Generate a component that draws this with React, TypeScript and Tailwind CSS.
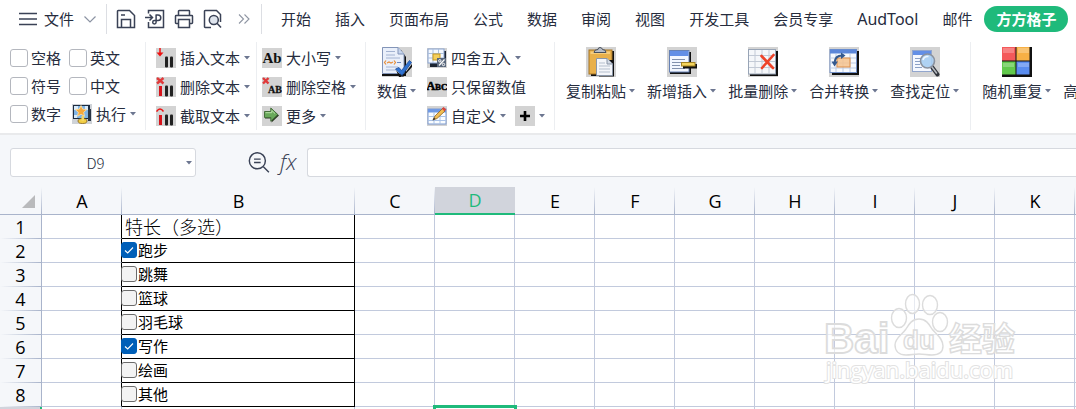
import React, { useState } from "react";

type IconProps = { className?: string };

const tabs = ["开始", "插入", "页面布局", "公式", "数据", "审阅", "视图", "开发工具", "会员专享", "AudTool", "邮件"];
const columns = ["A", "B", "C", "D", "E", "F", "G", "H", "I", "J", "K"];
const skills = [
  { name: "跑步", on: true },
  { name: "跳舞", on: false },
  { name: "篮球", on: false },
  { name: "羽毛球", on: false },
  { name: "写作", on: true },
  { name: "绘画", on: false },
  { name: "其他", on: false },
];

function Caret() {
  return (
    <svg viewBox="0 0 6 4" className="h-1 w-1.5 shrink-0" aria-hidden="true">
      <path d="M0 0h6L3 3.5z" fill="#6c7690" />
    </svg>
  );
}

/* ---------- quick access icons ---------- */

function Line({ children, className = "size-5" }: { children: React.ReactNode; className?: string }) {
  return (
    <svg viewBox="0 0 20 20" className={className} fill="none" stroke="#3a4256" strokeWidth="1.5" aria-hidden="true">
      {children}
    </svg>
  );
}

const SaveIcon = () => (
  <Line>
    <path d="M2.2 1.5H13.5L18.5 6.5V18.5H1.5V2.2Q1.5 1.5 2.2 1.5ZM5 6h4M5.5 18.5V10.5H14.5V18.5" />
  </Line>
);
const ExportIcon = () => (
  <Line>
    <path d="M3.5 4.5V1.5H18.5V18.5H3.5V13M0 8.5H7.5M4.5 5.5l3 3-3 3" />
    <path d="M10.5 6H13a2.8 2.8 0 0 1 0 5.6H9.4a1.7 1.7 0 1 0 1.7 1.7V6" />
  </Line>
);
const PrintIcon = () => (
  <Line>
    <path d="M4.5 6V2.2Q4.5 1.5 5.2 1.5H14.8Q15.5 1.5 15.5 2.2V6M4.5 14.5H2.2Q1.5 14.5 1.5 13.8V7.2Q1.5 6.5 2.2 6.5H17.8Q18.5 6.5 18.5 7.2V13.8Q18.5 14.5 17.8 14.5H15.5M4.5 10.5H15.5V18.5H4.5Z" />
  </Line>
);
const PreviewIcon = () => (
  <Line>
    <path d="M8 18.5H2.2Q1.5 18.5 1.5 17.8V2.2Q1.5 1.5 2.2 1.5H13.5L17.5 5.5V13" />
    <circle cx="10.8" cy="11" r="4.5" fill="#dfe5ee" />
    <path d="M14 14.3L18 18.5" />
  </Line>
);

/* ---------- small ribbon icons ---------- */

function Small({ children, bg = "#d3d3d3" }: { children: React.ReactNode; bg?: string }) {
  return (
    <svg viewBox="0 0 20 20" className="size-5 shrink-0" aria-hidden="true">
      <rect width="20" height="20" fill={bg} />
      {children}
    </svg>
  );
}

const Bars = ({ red = false }: { red?: boolean }) => (
  <g>
    {red && <rect x="3" y="9" width="3" height="10" fill="#d8141c" />}
    <rect x="9" y="8.5" width="3" height="11" rx="1" fill="#222" />
    <rect x="14" y="8.5" width="3" height="11" rx="1" fill="#222" />
  </g>
);
const InsertTextIcon = () => (
  <Small>
    <path d="M4 0V5" stroke="#ee1111" strokeWidth="1.5" />
    <path d="M.5 4.5H7.5L4 8.5Z" fill="#ee1111" />
    <Bars />
  </Small>
);
const DeleteTextIcon = () => (
  <Small>
    <path d="M1 1L7.5 6.5M7.5 1L1 6.5" stroke="#e0393a" strokeWidth="2.4" />
    <Bars red />
  </Small>
);
const CutTextIcon = () => (
  <Small>
    <path d="M.5 5.5Q4 .5 7.5 5.5" fill="none" stroke="#ee1111" strokeWidth="1.5" />
    <Bars red />
  </Small>
);
const RunIcon = () => (
  <Small bg="#cfd3d8">
    <rect x="1" y="1" width="17" height="14" fill="#1d2c40" />
    <rect x="2" y="2" width="14" height="12" fill="#7fb4e6" />
    <path d="M2 2h4v4H2zM13 2h3v4h-3zM2 11h3v3H2z" fill="#d9ebfa" />
    <path d="M9 1.5l1.7 3.6 4 .5-3 2.7.8 4L9 10.3l-3.5 2 .8-4-3-2.7 4-.5z" fill="#f6a93b" stroke="#ffe5ad" strokeWidth=".8" />
    <path d="M16 5h3v12h-3z" fill="#2b3645" />
    <ellipse cx="10.5" cy="17" rx="4.5" ry="2.5" fill="#f2cf46" stroke="#8a6417" strokeWidth=".8" />
    <path d="M9.5 12h2.500v5h-2.500z" fill="#f5d765" />
  </Small>
);
const CaseIcon = () => (
  <Small>
    <text x="10" y="15" textAnchor="middle" fontSize="15" fontWeight="700" fontFamily="Liberation Serif, serif" fill="#111">Ab</text>
  </Small>
);
const TrimIcon = () => (
  <Small>
    <path d="M1 1L6.5 6.5M6.5 1L1 6.5" stroke="#e0393a" strokeWidth="2.4" />
    <text x="13" y="16" textAnchor="middle" fontSize="10" fontWeight="700" fontFamily="Liberation Serif, serif" fill="#111" stroke="#111" strokeWidth=".3">AB</text>
  </Small>
);
const MoreIcon = () => (
  <Small>
    <path d="M3 6.5H9.5V2.5L17 9.5L9.5 16.5V12.5H3Z" fill="#2b3b22" />
    <path d="M2.5 5.5H8.8V2L15.8 8.6L8.8 15.2V11.5H2.5Z" fill="#69a95a" stroke="#466f3c" strokeWidth="1" />
    <path d="M3.5 6.7H9.8V4.5L13 7.5" fill="none" stroke="#b9e0a8" />
  </Small>
);
const GridPaper = () => (
  <g>
    <rect x="1" y="1" width="16" height="14" fill="#f4f8ff" stroke="#8aa4cf" />
    <path d="M1 5.5H17M1 10H17M6 1V15M11.5 1V15" stroke="#a9bfdf" />
  </g>
);
const RoundIcon = () => (
  <Small>
    <path d="M3 3H19V19H3Z" fill="#1c2431" />
    <GridPaper />
    <rect x="6" y="6" width="7" height="6" fill="#f4cf5c" stroke="#c79a22" />
    <rect x="10" y="10" width="9" height="9" fill="#59677c" />
    <path d="M12 17.5L17.5 11.5" stroke="#fff" strokeWidth="1.2" />
    <circle cx="12.8" cy="12.8" r="1.2" fill="none" stroke="#fff" />
    <circle cx="16.5" cy="16.5" r="1.2" fill="none" stroke="#fff" />
  </Small>
);
const AbcIcon = () => (
  <Small>
    <text x="10" y="13" textAnchor="middle" fontSize="12" fontWeight="700" fontFamily="Liberation Serif, serif" fill="#000" stroke="#000" strokeWidth=".5">
      A<tspan fontSize="9">BC</tspan>
    </text>
  </Small>
);
const CustomIcon = () => (
  <Small>
    <rect x="1" y="3" width="18" height="15" fill="#fafdff" stroke="#7d9ad0" />
    <rect x="1" y="3" width="18" height="3.5" fill="#6f99e4" />
    <path d="M1 10.5H19M1 14.5H19M7 6V18M13 6V18" stroke="#a9c2e8" />
    <path d="M6 14L8 10L15.5 2.5L18 5L10 12.5Z" fill="#f1bd52" stroke="#8f6425" strokeWidth=".8" />
    <path d="M14.8 2.8L16.5 1L19.3 3.5L17.5 5.3Z" fill="#d9443d" />
    <path d="M5.5 14.5L7 11.5L8.5 13Z" fill="#333" />
  </Small>
);
const PlusIcon = () => (
  <Small>
    <path d="M10 5V15M5 10H15" stroke="#000" strokeWidth="2.6" />
  </Small>
);

/* ---------- large ribbon icons ---------- */

function Large({ children, bg = "#d3d3d3" }: { children: React.ReactNode; bg?: string }) {
  return (
    <svg viewBox="0 0 30 30" className="size-[30px]" aria-hidden="true">
      <rect width="30" height="30" fill={bg} />
      {children}
    </svg>
  );
}

const ValueIcon = () => (
  <Large>
    <path d="M3 3H19L24 10V29H0V27H3Z" fill="#111" />
    <path d="M.5 .5H16L22 7V26.5H.5Z" fill="#e9effa" stroke="#8395b8" />
    <path d="M16 .5V7H22" fill="#c6d5ee" stroke="#8395b8" />
    <path d="M4 4.5H13M4 8H13M4 11H18M4 20H16M4 23H14" stroke="#a4b4d2" />
    <path d="M4 13.5L2.5 15.5L4 17.5M12 13.5L13.5 15.5L12 17.5M5 16L7 15L9 16L11 15" fill="none" stroke="#e88e38" strokeWidth="1.2" />
    <path d="M15 15.5h4" stroke="#6d89bf" />
    <path d="M14 23L20 30L30 17V20L21 30H17Z" fill="#111" />
    <path d="M13.5 22L17 20.5L19.5 23.5L27.5 13.5L29.5 15.5L20 28.5Z" fill="#2f72d0" stroke="#1d4c9b" strokeWidth=".8" />
  </Large>
);
const PasteIcon = () => (
  <Large>
    <path d="M5 4H28V29H5Z" fill="#111" />
    <rect x="3" y="3" width="23" height="24" fill="#e9b04a" stroke="#a47426" />
    <path d="M4.5 4.5H24V7H4.5Z" fill="#f6cd7c" />
    <path d="M8 5.5Q8 2.5 12 2.5Q12 .5 14 .5Q16 .5 16.5 2.5Q20 2.5 20 5.5Z" fill="#b8bec8" stroke="#49505c" />
    <path d="M13 13H28V29.5H13Z" fill="#111" />
    <path d="M10.5 11.5H21L26.5 17V28.5H10.5Z" fill="#f4f6fa" stroke="#8a96a8" />
    <path d="M21 11.5V17H26.5" fill="#d3dae5" stroke="#8a96a8" />
    <path d="M13 16H19M13 19H24M13 22H24M13 25H24" stroke="#b5bfcd" />
  </Large>
);
const AddIcon = () => (
  <Large>
    <path d="M5 5H24V27H3V25H5Z" fill="#111" />
    <rect x="2.5" y="3.5" width="19.5" height="21.5" fill="#f3f7ff" stroke="#6681b4" />
    <rect x="3" y="4" width="18.5" height="5" fill="#638fe6" />
    <path d="M5 12.5H18M5 15.5H14M5 18.5H13M5 21.5H18" stroke="#8291ad" />
    <rect x="16" y="17" width="14" height="4.5" fill="#111" />
    <rect x="14.5" y="15.5" width="13.5" height="3.5" fill="#f4d45e" stroke="#a38220" />
  </Large>
);
const BatchDeleteIcon = () => (
  <Large>
    <path d="M3 4H30V29H2V27H3Z" fill="#111" />
    <rect x=".5" y="2.5" width="27" height="24.5" fill="#f5f7fa" stroke="#98a4b6" />
    <path d="M1 8.5H27M1 14.5H27M1 20.5H27M7 3V27M14 3V27M21 3V27" stroke="#c3cad6" />
    <path d="M13.5 9L25 21M25.5 8L14 21" stroke="#ee4329" strokeWidth="2.6" strokeLinecap="round" />
  </Large>
);
const MergeIcon = () => (
  <Large>
    <path d="M3 4H30V28H3Z" fill="#111" />
    <rect x="1" y="2.5" width="26.5" height="23" fill="#f7faff" stroke="#7390c6" />
    <rect x="1" y="2.5" width="26.5" height="4" fill="#5c87da" />
    <path d="M1 11H27M1 16H27M1 21H27M7 7V25M14 7V25M21 7V25" stroke="#bccbe4" />
    <rect x="8" y="11" width="13" height="9" fill="#f6c28d" fillOpacity=".85" stroke="#dd8f4b" />
    <path d="M5.5 16Q6 8.500 13 8.500" fill="none" stroke="#34598e" strokeWidth="2" />
    <path d="M2.5 14.5H9L5.5 19.5ZM12 5.5V12L16.500 8.500Z" fill="#34598e" />
  </Large>
);
const FindIcon = () => (
  <Large>
    <rect x="2.5" y="3.5" width="19" height="21" fill="#f5f8ff" stroke="#92a6cd" />
    <rect x="3" y="4" width="18" height="4" fill="#638fe6" />
    <path d="M5 11.5H12M5 14.5H10M5 17.5H10M5 20.5H12" stroke="#8ba0c6" />
    <path d="M22 20L27.5 27.5" stroke="#30343b" strokeWidth="4" strokeLinecap="round" />
    <path d="M22 20L26.5 26" stroke="#b6bac1" strokeWidth="1.6" strokeLinecap="round" />
    <circle cx="17.5" cy="14" r="7" fill="#a7cdf2" fillOpacity=".9" stroke="#8b929e" strokeWidth="1.6" />
    <path d="M13 13Q14 9 18.5 9.5" fill="none" stroke="#eef7ff" strokeWidth="1.6" />
  </Large>
);
const RandomIcon = () => (
  <Large bg="#111111">
    <path d="M0 0H13.500V13.500H0Z" fill="#f4595a" />
    <path d="M14.500 0H27.500V13.500H14.500Z" fill="#f7b045" />
    <path d="M0 14.500H13.500V27.500H0Z" fill="#62c94c" />
    <path d="M14.500 14.500H27.500V27.500H14.500Z" fill="#5a8df0" />
    <path d="M1 1H12V6H1ZM16 1H27V6H16ZM1 16H12V20H1ZM16 16H27V20H16Z" fill="#fff" fillOpacity=".25" />
  </Large>
);

/* ---------- ribbon parts ---------- */

function SmallButton({ icon: Icon, label, caret = true }: { icon: React.ComponentType<IconProps>; label: string; caret?: boolean }) {
  return (
    <button type="button" className="flex h-7 items-center gap-1 whitespace-nowrap">
      <Icon />
      <span>{label}</span>
      {caret && <Caret />}
    </button>
  );
}

function LargeButton({ icon: Icon, label }: { icon: React.ComponentType<IconProps>; label: string }) {
  return (
    <button type="button" className="flex shrink-0 flex-col items-center gap-1 self-start pt-[5px]">
      <Icon />
      <span className="flex items-center gap-[3px] whitespace-nowrap leading-5">
        {label}
        <Caret />
      </span>
    </button>
  );
}

function RibbonCheck({ label }: { label: string }) {
  return (
    <label className="flex items-center gap-[3px] whitespace-nowrap">
      <input type="checkbox" className="size-[18px] appearance-none rounded-[3px] border border-[#b4b7be] bg-white checked:bg-[#1fba7b]" />
      {label}
    </label>
  );
}

function CellCheck({ name, initial }: { name: string; initial: boolean }) {
  const [on, setOn] = useState(initial);
  return (
    <label className="-ml-px flex items-center gap-px pb-0.5">
      <span className="grid size-4 shrink-0">
        <input
          type="checkbox"
          checked={on}
          onChange={(e) => setOn(e.target.checked)}
          className="col-start-1 row-start-1 size-4 appearance-none rounded-[3px] border border-[#6b6b6b] bg-[#f3f3f3] checked:border-[#005fb8] checked:bg-[#005fb8]"
        />
        {on && (
          <svg viewBox="0 0 16 16" className="pointer-events-none col-start-1 row-start-1 size-4" aria-hidden="true">
            <path d="M4 8.5L6.7 11L12 5.5" fill="none" stroke="#fff" strokeWidth="1.1" />
          </svg>
        )}
      </span>
      {name}
    </label>
  );
}

function Watermark() {
  return (
    <svg viewBox="0 0 200 105" className="pointer-events-none absolute top-[98px] right-14 h-[105px] w-[200px]" fill="#fff" fillOpacity=".6" stroke="#dcdcdc" strokeWidth="1.4" aria-hidden="true">
      <text x="4" y="68" fontSize="42" fontWeight="700" strokeWidth="1.8" fontFamily="Liberation Sans, sans-serif">Bai</text>
      <ellipse cx="79" cy="33" rx="7.5" ry="9.5" />
      <ellipse cx="92.5" cy="19" rx="7" ry="9.5" />
      <ellipse cx="110" cy="20" rx="7.5" ry="9.5" />
      <ellipse cx="120" cy="37" rx="7.5" ry="9.5" />
      <path d="M99 34C106 34 109 39 112 44C116 49 123 53 123 61C123 67 119 70 112 70C107 70 104 69 99 69C94 69 91 70 86 70C79 70 75 66 75 60C75 53 82 50 86 44C89 39 92 34 99 34Z" />
      <text x="83" y="64" fontSize="26" fontWeight="700" fontFamily="Liberation Sans, sans-serif">du</text>
      <text x="129" y="66" fontSize="33" fontWeight="700" fontFamily="Noto Sans CJK SC, sans-serif">经验</text>
      <text x="6" y="93" fontSize="22" fillOpacity="1" stroke="#e2e2e2" strokeWidth="2" paintOrder="stroke" fontFamily="Open Sans, sans-serif">jingyan.baidu.com</text>
    </svg>
  );
}

const gridCell = "border-r border-b border-[#c2cadd] p-0";
const blackCell = "border-r border-b border-black p-0";
const rowHead =
  "border-r border-[#a9b4cb] bg-[#f5f7fa] bg-[linear-gradient(to_right,transparent,#a9b4cb)] bg-[length:100%_1px] bg-bottom bg-no-repeat p-0 text-center font-normal";

function GridRow({ n, children }: { n: number; children: React.ReactNode }) {
  return (
    <tr className="h-6">
      <th scope="row" className={rowHead}>{n}</th>
      <td className="border-r border-b border-r-black border-b-[#c2cadd] p-0" />
      <td className={blackCell}>{children}</td>
      {columns.slice(2).map((c) => (
        <td key={c} className={gridCell} />
      ))}
      <td className="border-b border-[#c2cadd] p-0" />
    </tr>
  );
}

export default function App() {
  return (
    <div className="flex h-screen flex-col overflow-hidden bg-white font-['Open_Sans','Noto_Sans_CJK_SC',sans-serif] text-[15px] leading-5 text-[#262c3d]">
      <header className="flex h-[38px] shrink-0 items-center whitespace-nowrap">
        <button type="button" className="flex items-center gap-[7px] pl-[19px]">
          <svg viewBox="0 0 18 14" className="h-3.5 w-[18px]" stroke="#3a4256" strokeWidth="1.3" aria-hidden="true">
            <path d="M0 1.5H18M0 7H18M0 12.5H18" />
          </svg>
          文件
          <svg viewBox="0 0 12 8" className="ml-[3px] h-2 w-3" fill="none" stroke="#8b93a3" strokeWidth="1.2" aria-hidden="true">
            <path d="M.5 1.5L6 7L11.5 1.5" />
          </svg>
        </button>
        <div className="ml-2.5 flex h-[30px] items-center gap-[9px] border-x border-[#dcdee3] pr-[11px] pl-[9px]">
          <button type="button" aria-label="保存"><SaveIcon /></button>
          <button type="button" aria-label="输出"><ExportIcon /></button>
          <button type="button" aria-label="打印"><PrintIcon /></button>
          <button type="button" aria-label="预览"><PreviewIcon /></button>
          <button type="button" aria-label="展开" className="ml-1.5">
            <svg viewBox="0 0 12 10" className="h-2.5 w-3" fill="none" stroke="#8f96a3" strokeWidth="1.1" aria-hidden="true">
              <path d="M1 .5L5.5 5L1 9.5M6.5 .5L11 5L6.5 9.5" />
            </svg>
          </button>
        </div>
        <nav className="flex items-center gap-6 pl-[19px]">
          {tabs.map((t) => (
            <button key={t} type="button" className={t === "AudTool" ? "font-['Noto_Sans',sans-serif] text-base leading-5" : undefined}>{t}</button>
          ))}
        </nav>
        <button type="button" className="ml-3 h-[26px] rounded-full bg-[#1fba7b] px-3 font-bold text-white">方方格子</button>
      </header>

      <section className="flex h-[97px] shrink-0 items-stretch border-b-2 border-[#e9eaec] pt-1 pb-[3px]">
        <div className="flex shrink-0 flex-col border-r border-[#eceef1] pt-0.5 pr-[9px] pl-2.5">
          <div className="flex h-7 items-center gap-2"><RibbonCheck label="空格" /><RibbonCheck label="英文" /></div>
          <div className="flex h-7 items-center gap-2"><RibbonCheck label="符号" /><RibbonCheck label="中文" /></div>
          <div className="flex h-7 items-center gap-[11px]"><RibbonCheck label="数字" /><SmallButton icon={RunIcon} label="执行" /></div>
        </div>
        <div className="flex shrink-0 flex-col gap-px border-r border-[#eceef1] pt-0.5 pr-1.5 pl-2.5">
          <SmallButton icon={InsertTextIcon} label="插入文本" />
          <SmallButton icon={DeleteTextIcon} label="删除文本" />
          <SmallButton icon={CutTextIcon} label="截取文本" />
        </div>
        <div className="flex shrink-0 flex-col gap-px border-r border-[#eceef1] pt-0.5 pr-[9px] pl-[5px]">
          <SmallButton icon={CaseIcon} label="大小写" />
          <SmallButton icon={TrimIcon} label="删除空格" />
          <SmallButton icon={MoreIcon} label="更多" />
        </div>
        <div className="flex shrink-0 gap-[11px] border-r border-[#eceef1] pr-[9px] pl-[11px]">
          <LargeButton icon={ValueIcon} label="数值" />
          <div className="flex flex-col gap-px pt-0.5">
            <SmallButton icon={RoundIcon} label="四舍五入" />
            <SmallButton icon={AbcIcon} label="只保留数值" caret={false} />
            <div className="flex items-center gap-[9px]">
              <SmallButton icon={CustomIcon} label="自定义" />
              <button type="button" aria-label="添加" className="flex items-center gap-1"><PlusIcon /><Caret /></button>
            </div>
          </div>
        </div>
        <div className="flex shrink-0 gap-3 border-r border-[#eceef1] px-[11px]">
          <LargeButton icon={PasteIcon} label="复制粘贴" />
          <LargeButton icon={AddIcon} label="新增插入" />
          <LargeButton icon={BatchDeleteIcon} label="批量删除" />
          <LargeButton icon={MergeIcon} label="合并转换" />
          <LargeButton icon={FindIcon} label="查找定位" />
        </div>
        <div className="flex min-w-0 flex-1 gap-3 overflow-hidden pl-[11px]">
          <LargeButton icon={RandomIcon} label="随机重复" />
          <button type="button" className="shrink-0 self-start pt-[39px]">高</button>
        </div>
      </section>

      <section className="flex h-[52px] shrink-0 items-start bg-[#f5f7fa] pt-[13px] pl-2.5">
        <div className="flex h-[29px] w-[186px] shrink-0 items-center rounded-[3px] border border-[#d6d9df] bg-white">
          <input aria-label="名称框" defaultValue="D9" className="h-full w-[169px] min-w-0 bg-transparent text-center font-['Noto_Sans_CJK_SC',sans-serif] text-[15px] font-light outline-none" />
          <button type="button" aria-label="选择名称" className="flex h-full flex-1 items-center pl-1.5"><Caret /></button>
        </div>
        <div className="flex h-[29px] shrink-0 items-center gap-2.5 pr-2.5 pl-[52px]">
          <Line className="size-[22px]">
            <circle cx="8.5" cy="8" r="7.3" strokeWidth="1.3" />
            <path d="M14 13.5L19 18.5M5.5 6.5H11.5M5.5 9.5H11.5" strokeWidth="1.3" />
          </Line>
          <button type="button" className="pb-1 font-['Open_Sans',sans-serif] text-[22px] font-light italic text-[#3a4256]">fx</button>
        </div>
        <input aria-label="编辑栏" className="h-[29px] min-w-0 flex-1 rounded-l-[3px] border border-r-0 border-[#d6d9df] bg-white px-2 outline-none" />
      </section>

      <main className="relative min-h-0 flex-1 overflow-hidden">
        <table className="w-full table-fixed border-separate border-spacing-0 text-black">
          <colgroup>
            <col className="w-[42px]" />
            {columns.map((c) => (
              <col key={c} className={c === "B" ? "w-[233px]" : "w-20"} />
            ))}
            <col />
          </colgroup>
          <thead className="text-[18px] leading-5">
            <tr className="h-7">
              <th aria-label="全选" className="border-b border-[#a9b4cb] bg-[#f5f7fa] bg-[linear-gradient(to_bottom,transparent,#a9b4cb)] bg-[length:1px_100%] bg-right bg-no-repeat p-0 pr-[7px] align-bottom">
                <svg viewBox="0 0 13 13" className="mb-1.5 ml-auto size-[13px]" aria-hidden="true">
                  <path d="M13 0V13H0Z" fill="#b9babc" />
                </svg>
              </th>
              {columns.map((c) => (
                <th
                  key={c}
                  scope="col"
                  className={
                    c === "D"
                      ? "border-b-2 border-[#1fba7b] bg-[#d1d4dc] p-0 font-normal text-[#1fba7b]"
                      : "border-b border-[#a9b4cb] bg-[#f5f7fa] bg-[linear-gradient(to_bottom,transparent,#a9b4cb)] bg-[length:1px_100%] bg-right bg-no-repeat p-0 font-normal"
                  }
                >
                  {c}
                </th>
              ))}
              <td className="border-b border-[#a9b4cb] bg-[#f5f7fa] p-0" />
            </tr>
          </thead>
          <tbody className="text-[18px] leading-5">
            <GridRow n={1}>
              <span className="block pl-[3px] font-light">特长（多选）</span>
            </GridRow>
            {skills.map((s, i) => (
              <GridRow key={s.name} n={i + 2}>
                <div className="text-[15px]"><CellCheck name={s.name} initial={s.on} /></div>
              </GridRow>
            ))}
            <tr className="h-6">
              <th scope="row" aria-label="9" className="border-r-2 border-b border-r-[#1fba7b] border-b-[#a9b4cb] bg-[#d1d4dc] p-0" />
              {columns.map((c) => (
                <td key={c} className={c === "D" ? "relative p-0" : gridCell}>
                  {c === "D" && <div className="absolute -inset-x-0.5 -top-0.5 bottom-0 border-[3px] border-[#1fba7b]" />}
                </td>
              ))}
              <td className="border-b border-[#c2cadd] p-0" />
            </tr>
          </tbody>
        </table>
        <Watermark />
      </main>
    </div>
  );
}
